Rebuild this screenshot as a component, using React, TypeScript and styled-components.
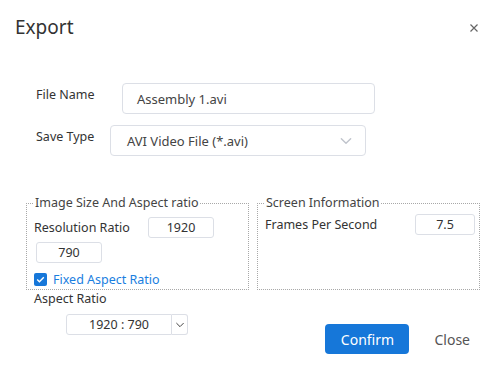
import styled, { createGlobalStyle } from 'styled-components'

const GlobalStyle = createGlobalStyle`
	body {
		margin: 0;
		background: #fff;
		font-family: 'Noto Sans', 'Open Sans', sans-serif;
		color: #333;
	}
`

function ChevronDown({ size = 12, color = '#bbb' }: { size?: number; color?: string }) {
	return (
		<svg width={size} height={size} viewBox="0 0 12 12" fill="none">
			<path d="M2 4l4 4 4-4" stroke={color} strokeWidth="1.2" strokeLinecap="round" strokeLinejoin="round" />
		</svg>
	)
}

function App() {
	return (
		<>
			<GlobalStyle />
			<Dialog>
				<Header>
					<Title>Export</Title>
					<CloseIcon>
						<svg width="10" height="10" viewBox="0 0 10 10">
							<path d="M1.5 1.5l7 7M8.5 1.5l-7 7" stroke="#666" strokeWidth="1.2" />
						</svg>
					</CloseIcon>
				</Header>

				<Form>
					<FormRow>
						<Label $width={86}>File Name</Label>
						<TextInput $width={253}>Assembly 1.avi</TextInput>
					</FormRow>
					<FormRow>
						<Label $width={74}>Save Type</Label>
						<SelectBox $width={256}>
							<span>AVI Video File (*.avi)</span>
							<ChevronDown size={14} color="#c0c4cc" />
						</SelectBox>
					</FormRow>
				</Form>

				<Groups>
					<Group>
						<Legend>Image Size And Aspect ratio</Legend>
						<GroupRow $top={7}>
							<SmallLabel $width={114}>Resolution Ratio</SmallLabel>
							<NumberBox $width={66}>1920</NumberBox>
						</GroupRow>
						<GroupRow $top={4}>
							<Indent />
							<NumberBox $width={66}>790</NumberBox>
						</GroupRow>
						<CheckRow>
							<CheckBox>
								<svg width="9" height="9" viewBox="0 0 9 9">
									<path d="M1.2 4.6l2.2 2.2 4.4-4.6" stroke="#fff" strokeWidth="1.4" fill="none" />
								</svg>
							</CheckBox>
							<CheckLabel>Fixed Aspect Ratio</CheckLabel>
						</CheckRow>
						<AspectLabel>Aspect Ratio</AspectLabel>
						<AspectSelect>
							<AspectValue>1920 : 790</AspectValue>
							<AspectArrow>
								<ChevronDown size={10} color="#444" />
							</AspectArrow>
						</AspectSelect>
					</Group>
					<Group>
						<Legend>Screen Information</Legend>
						<GroupRow $top={4} $spread>
							<SmallLabel>Frames Per Second</SmallLabel>
							<NumberBox $width={60}>7.5</NumberBox>
						</GroupRow>
					</Group>
				</Groups>

				<Footer>
					<PrimaryButton>Confirm</PrimaryButton>
					<TextButton>Close</TextButton>
				</Footer>
			</Dialog>
		</>
	)
}

const Dialog = styled.div`
	width: 495px;
	height: 365px;
	box-sizing: border-box;
	background: #fff;
	overflow: hidden;
`

const Header = styled.div`
	display: flex;
	align-items: center;
	justify-content: space-between;
	height: 54px;
	padding: 0 16px 0 15px;
`

const Title = styled.div`
	font-size: 19px;
	color: #333;
`

const CloseIcon = styled.div`
	display: flex;
	width: 10px;
	height: 10px;
	margin-top: 2px;
`

const Form = styled.div`
	display: flex;
	flex-direction: column;
	gap: 11px;
	padding: 29px 0 0 36px;
`

const FormRow = styled.div`
	display: flex;
	align-items: center;
`

const Label = styled.div<{ $width: number }>`
	width: ${(p) => p.$width}px;
	flex-shrink: 0;
	font-size: 12.5px;
	color: #333;
	margin-top: -8px;
`

const TextInput = styled.div<{ $width: number }>`
	width: ${(p) => p.$width}px;
	height: 31px;
	box-sizing: border-box;
	border: 1px solid #dcdfe6;
	border-radius: 4px;
	padding-left: 14px;
	display: flex;
	align-items: center;
	font-size: 13px;
	color: #444;
`

const SelectBox = styled(TextInput)`
	justify-content: space-between;
	padding: 0 12px 0 16px;
`

const Groups = styled.div`
	display: flex;
	gap: 8px;
	padding: 40px 0 0 26px;
`

const Group = styled.fieldset`
	margin: 0;
	width: 223px;
	height: 94px;
	box-sizing: border-box;
	padding: 0 4px 0 7px;
	border: 1px dotted #a8a8a8;
	min-width: 0;
`

const Legend = styled.legend`
	padding: 0 1px;
	font-size: 12.5px;
	color: #444;
	line-height: 14px;
`

const GroupRow = styled.div<{ $spread?: boolean; $top: number }>`
	display: flex;
	align-items: center;
	justify-content: ${(p) => (p.$spread ? 'space-between' : 'flex-start')};
	margin-top: ${(p) => p.$top}px;
`

const SmallLabel = styled.div<{ $width?: number }>`
	width: ${(p) => (p.$width ? `${p.$width}px` : 'auto')};
	flex-shrink: 0;
	font-size: 12.5px;
	color: #333;
`

const Indent = styled.div`
	width: 2px;
`

const NumberBox = styled.div<{ $width: number }>`
	width: ${(p) => p.$width}px;
	height: 21px;
	box-sizing: border-box;
	border: 1px solid #dcdfe6;
	border-radius: 3px;
	display: flex;
	align-items: center;
	justify-content: center;
	font-size: 12.5px;
	color: #333;
`

const CheckRow = styled.div`
	display: flex;
	align-items: center;
	gap: 6px;
	margin-top: 8px;
`

const CheckBox = styled.div`
	width: 13px;
	height: 13px;
	border-radius: 2px;
	background: #1677d9;
	display: flex;
	align-items: center;
	justify-content: center;
`

const CheckLabel = styled.div`
	font-size: 12.5px;
	color: #1a7ee0;
`

const AspectLabel = styled.div`
	font-size: 12.5px;
	color: #333;
	margin-top: 4px;
	line-height: 14px;
`

const AspectSelect = styled.div`
	display: flex;
	margin: 8px 0 0 32px;
	height: 21px;
`

const AspectValue = styled.div`
	width: 106px;
	box-sizing: border-box;
	border: 1px solid #dcdfe6;
	border-radius: 3px 0 0 3px;
	display: flex;
	align-items: center;
	justify-content: center;
	font-size: 12.5px;
	color: #333;
`

const AspectArrow = styled.div`
	width: 16px;
	box-sizing: border-box;
	border: 1px solid #dcdfe6;
	border-left: none;
	border-radius: 0 3px 3px 0;
	display: flex;
	align-items: center;
	justify-content: center;
`

const Footer = styled.div`
	display: flex;
	justify-content: flex-end;
	align-items: center;
	gap: 25px;
	padding: 34px 25px 0 0;
`

const PrimaryButton = styled.button`
	width: 84px;
	height: 30px;
	border: none;
	border-radius: 4px;
	background: #1677d9;
	color: #fff;
	font-family: inherit;
	font-size: 14px;
`

const TextButton = styled.button`
	border: none;
	background: none;
	padding: 0;
	color: #555;
	font-family: inherit;
	font-size: 14px;
`

export default App
